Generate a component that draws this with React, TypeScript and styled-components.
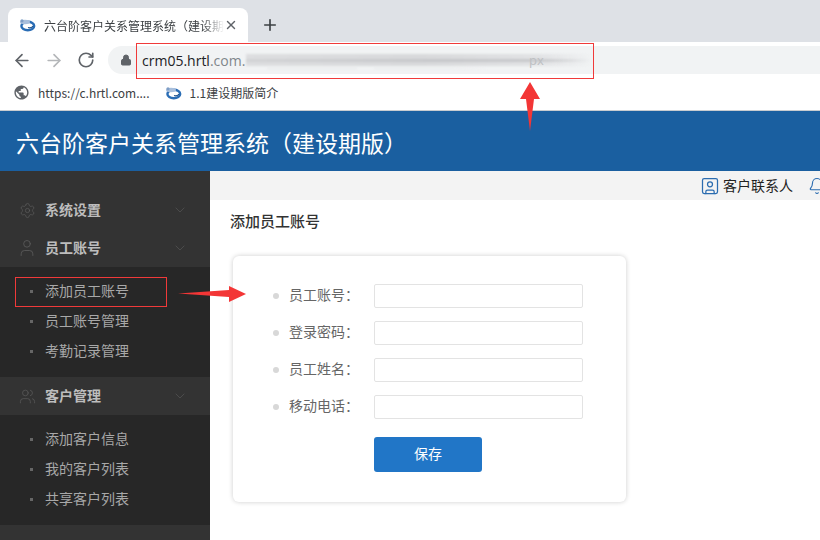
import React from "react";
import styled, { createGlobalStyle } from "styled-components";
import {
  ArrowLeft,
  ArrowRight,
  Bell,
  ChevronDown,
  Lock,
  Plus,
  RotateCw,
  Settings,
  SquareUser,
  User,
  Users,
  X,
} from "lucide-react";
import { MdPublic } from "react-icons/md";

const GlobalStyle = createGlobalStyle`
  html, body { margin: 0; padding: 0; background: #fff; overflow: hidden; }
  body { font-family: "Noto Sans CJK SC", "Liberation Sans", sans-serif; }
  * { box-sizing: border-box; }
`;

const Page = styled.div`
  position: relative;
  width: 820px;
  height: 540px;
  overflow: hidden;
`;

const TabStrip = styled.div`
  height: 42px;
  background: #dee1e6;
  display: flex;
  align-items: flex-end;
  padding-left: 8px;
`;

const Tab = styled.div`
  width: 240px;
  height: 34px;
  background: #fff;
  border-radius: 8px 8px 0 0;
  display: flex;
  align-items: center;
  padding: 0 10px 0 11px;
  color: #3c4043;
  font-size: 12px;
`;

const TabTitle = styled.span`
  flex: 1;
  margin-left: 8px;
  white-space: nowrap;
  overflow: hidden;
  -webkit-mask-image: linear-gradient(to right, #000 88%, transparent 100%);
  mask-image: linear-gradient(to right, #000 88%, transparent 100%);
`;

const NewTab = styled.div`
  height: 34px;
  width: 28px;
  margin-left: 8px;
  display: flex;
  align-items: center;
  justify-content: center;
  color: #3c4043;
`;

const Toolbar = styled.div`
  height: 36px;
  background: #fff;
  display: flex;
  align-items: center;
  padding-left: 12px;
  gap: 12px;
`;

const NavButton = styled.div<{ $off?: boolean }>`
  width: 20px;
  height: 20px;
  display: flex;
  align-items: center;
  justify-content: center;
  color: ${(p) => (p.$off ? "#b4b6b9" : "#5f6368")};
`;

const Omnibox = styled.div`
  flex: 1;
  height: 28px;
  background: #f1f3f4;
  border-radius: 14px 0 0 14px;
  display: flex;
  align-items: center;
  padding-left: 12px;
  color: #5f6368;
`;

const UrlText = styled.span`
  margin-left: 10px;
  font-family: "Open Sans", "Liberation Sans", sans-serif;
  font-size: 14px;
  color: #202124;
  white-space: nowrap;
`;

const UrlFaded = styled.span`
  color: #80868b;
`;

const Bookmarks = styled.div`
  height: 33px;
  background: #fff;
  border-bottom: 1px solid #c9ccd0;
  display: flex;
  align-items: center;
  padding: 0 0 3px 13px;
  font-size: 12px;
  color: #3c4043;
`;

const Bookmark = styled.div`
  display: flex;
  align-items: center;
  gap: 8px;
  margin-right: 15px;
  white-space: nowrap;
`;

const Banner = styled.header`
  height: 60px;
  background: #1a5fa0;
  color: #fff;
  font-size: 23px;
  line-height: 62px;
  padding-left: 16px;
  white-space: nowrap;
`;

const Body = styled.div`
  display: flex;
  height: 369px;
`;

const Sidebar = styled.nav`
  width: 210px;
  flex: none;
  background: #333;
  padding-top: 20px;
`;

const GroupHead = styled.div`
  height: 38px;
  display: flex;
  align-items: center;
  padding: 0 22px 0 17px;
  color: #bdbdbd;
  font-size: 14px;
  font-weight: 700;
`;

const GroupIcon = styled.span`
  width: 20px;
  margin-right: 8px;
  display: flex;
  justify-content: center;
  color: #5c5c5c;
`;

const GroupName = styled.span`
  flex: 1;
  padding-bottom: 2px;
`;

const Chevron = styled(ChevronDown)`
  color: #555;
`;

const SubList = styled.ul`
  list-style: none;
  margin: 0;
  padding: 9px 0 11px;
  background: #272727;
`;

const SubItem = styled.li`
  height: 30px;
  display: flex;
  align-items: center;
  padding: 0 0 2px 30px;
  color: #a8a8a8;
  font-size: 14px;
  &::before {
    content: "";
    width: 3px;
    height: 3px;
    background: #666;
    margin: 2px 12px 0 0;
  }
`;

const Main = styled.main`
  flex: 1;
  min-width: 0;
  overflow: hidden;
`;

const TopBar = styled.div`
  height: 29px;
  background: #f3f3f3;
  display: flex;
  align-items: center;
  justify-content: flex-end;
  margin-right: -6px;
  font-size: 14px;
  color: #222;
  svg {
    color: #2b6cb0;
    flex: none;
  }
`;

const TopLink = styled.div`
  display: flex;
  align-items: center;
  gap: 3px;
  margin-right: 15px;
  white-space: nowrap;
`;

const TopLabel = styled.span`
  padding-bottom: 2px;
`;

const Content = styled.div`
  padding: 11px 20px 0 20px;
`;

const PageTitle = styled.h2`
  margin: 0;
  font-size: 15px;
  line-height: 20px;
  font-weight: 500;
  color: #333;
`;

const FormCard = styled.form`
  margin: 25px 0 0 3px;
  width: 393px;
  height: 246px;
  background: #fff;
  border-radius: 6px;
  box-shadow: 0 0 5px rgba(0, 0, 0, 0.2);
  padding: 28px 0 0 40px;
  display: flex;
  flex-direction: column;
  gap: 13px;
`;

const Row = styled.div`
  display: flex;
  align-items: center;
  height: 24px;
  color: #666;
  font-size: 14px;
  &::before {
    content: "";
    width: 6px;
    height: 6px;
    border-radius: 50%;
    background: #d8d8d8;
    margin-right: 10px;
  }
`;

const Label = styled.label`
  width: 85px;
  padding-bottom: 4px;
`;

const Input = styled.input`
  width: 209px;
  height: 24px;
  border: 1px solid #e3e3e3;
  border-radius: 2px;
  background: #fff;
  outline: none;
`;

const SaveButton = styled.button`
  margin: 5px 0 0 101px;
  width: 108px;
  height: 35px;
  border: 0;
  border-radius: 3px;
  padding: 0 0 3px;
  background: #2176c7;
  color: #fff;
  font: inherit;
  font-size: 14px;
`;

const Smear = styled.div`
  position: absolute;
  left: 246px;
  top: 53px;
  width: 346px;
  height: 18px;
  filter: blur(0.8px);
  background:
    linear-gradient(to right, #d2d3d5 0, #c6c7ca 55%, #c8c9cc 85%, transparent 100%) 0 6px / 100% 3px no-repeat,
    linear-gradient(to right, #dddee0 0, #d8d9db 50%, #e2e3e5 85%, transparent 100%) 0 1px / 100% 12px no-repeat,
    linear-gradient(to right, transparent 6%, #e6e7e9 6%, #e6e7e9 32%, transparent 32%, transparent 37%, #e6e7e9 37%, #eaebed 60%, transparent 70%) 0 15px / 100% 1px no-repeat;
`;

const SmearText = styled.span`
  position: absolute;
  left: 529px;
  top: 51px;
  font-family: "Open Sans", "Liberation Sans", sans-serif;
  font-size: 13px;
  color: #bdbfc2;
`;

const RedBox = styled.div<{ $x: number; $y: number; $w: number; $h: number }>`
  position: absolute;
  left: ${(p) => p.$x}px;
  top: ${(p) => p.$y}px;
  width: ${(p) => p.$w}px;
  height: ${(p) => p.$h}px;
  border: 1px solid #f03a3a;
`;

const Overlay = styled.svg`
  position: absolute;
  left: 0;
  top: 0;
  pointer-events: none;
`;

function Favicon() {
  return (
    <svg width="17" height="14" viewBox="0 0 17 14" fill="none">
      <ellipse cx="8.8" cy="8" rx="6.4" ry="4.2" stroke="#2a6db5" strokeWidth="2.4" />
      <ellipse cx="6" cy="4" rx="5" ry="2.2" fill="#a9bfdc" />
      <circle cx="3" cy="2.8" r="1.6" fill="#7f9ec6" />
      <path d="M9 9.5c2 .6 4 0 5-1.5" stroke="#174a86" strokeWidth="1.2" />
    </svg>
  );
}

const groups = [
  { name: "系统设置", icon: Settings, iconSize: 17, items: [] as string[] },
  { name: "员工账号", icon: User, iconSize: 20, items: ["添加员工账号", "员工账号管理", "考勤记录管理"] },
  { name: "客户管理", icon: Users, iconSize: 17, items: ["添加客户信息", "我的客户列表", "共享客户列表"] },
];

const fields = ["员工账号", "登录密码", "员工姓名", "移动电话"];

export default function App() {
  return (
    <Page>
      <GlobalStyle />
      <TabStrip>
        <Tab>
          <Favicon />
          <TabTitle>六台阶客户关系管理系统（建设期版）</TabTitle>
          <X size={14} strokeWidth={2.4} color="#5f6368" />
        </Tab>
        <NewTab>
          <Plus size={18} strokeWidth={2.2} />
        </NewTab>
      </TabStrip>
      <Toolbar>
        <NavButton>
          <ArrowLeft size={21} />
        </NavButton>
        <NavButton $off>
          <ArrowRight size={21} />
        </NavButton>
        <NavButton>
          <RotateCw size={18} strokeWidth={2.2} />
        </NavButton>
        <Omnibox>
          <Lock size={12} fill="currentColor" strokeWidth={2} />
          <UrlText>
            crm05.hrtl<UrlFaded>.com.</UrlFaded>
          </UrlText>
        </Omnibox>
      </Toolbar>
      <Bookmarks>
        <Bookmark>
          <MdPublic size={17} color="#5f6368" />
          https://c.hrtl.com....
        </Bookmark>
        <Bookmark>
          <Favicon />
          1.1建设期版简介
        </Bookmark>
      </Bookmarks>
      <Banner>六台阶客户关系管理系统（建设期版）</Banner>
      <Body>
        <Sidebar>
          {groups.map((g) => (
            <React.Fragment key={g.name}>
              <GroupHead>
                <GroupIcon>
                  <g.icon size={g.iconSize} strokeWidth={1} />
                </GroupIcon>
                <GroupName>{g.name}</GroupName>
                <Chevron size={16} strokeWidth={1.1} />
              </GroupHead>
              {g.items.length > 0 && (
                <SubList>
                  {g.items.map((item) => (
                    <SubItem key={item}>{item}</SubItem>
                  ))}
                </SubList>
              )}
            </React.Fragment>
          ))}
        </Sidebar>
        <Main>
          <TopBar>
            <TopLink>
              <SquareUser size={20} strokeWidth={1.5} />
              <TopLabel>客户联系人</TopLabel>
            </TopLink>
            <Bell size={18} strokeWidth={1.5} />
          </TopBar>
          <Content>
            <PageTitle>添加员工账号</PageTitle>
            <FormCard>
              {fields.map((f) => (
                <Row key={f}>
                  <Label>{f}：</Label>
                  <Input />
                </Row>
              ))}
              <SaveButton type="button">保存</SaveButton>
            </FormCard>
          </Content>
        </Main>
      </Body>
      <Smear />
      <SmearText>px</SmearText>
      <RedBox $x={136} $y={43} $w={458} $h={36} />
      <RedBox $x={15} $y={277} $w={152} $h={30} />
      <Overlay width="820" height="540" viewBox="0 0 820 540">
        <polygon points="530,82 540,99 534,99 530,131 526,99 520,99" fill="#f33636" />
        <polygon points="178,293.5 229,290 229,286 246,294 229,302 229,297" fill="#f33636" />
      </Overlay>
    </Page>
  );
}
